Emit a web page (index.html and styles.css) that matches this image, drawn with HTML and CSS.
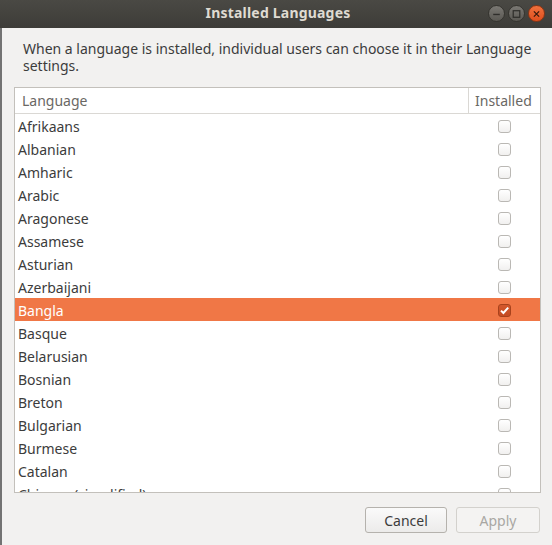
FILE: index.html
```html
<!DOCTYPE html>
<html>
<head>
<meta charset="utf-8">
<link rel="stylesheet" href="styles.css">
</head>
<body>
<div class="window">
  <div class="titlebar">
    <span class="title">Installed Languages</span>
    <div class="wbtns">
      <span class="wbtn gray"><svg width="16" height="16" viewBox="0 0 16 16"><line x1="4.5" y1="8.5" x2="11.5" y2="8.5" stroke="#2f2e2b" stroke-width="1.5"/></svg></span>
      <span class="wbtn gray"><svg width="16" height="16" viewBox="0 0 16 16"><rect x="4.5" y="4.5" width="7" height="7" fill="none" stroke="#2f2e2b" stroke-width="1.3"/></svg></span>
      <span class="wbtn close"><svg width="16" height="16" viewBox="0 0 16 16"><path d="M5.2 5.2 L10.8 10.8 M10.8 5.2 L5.2 10.8" stroke="#3a1a0c" stroke-width="1.4"/></svg></span>
    </div>
  </div>
  <div class="content">
    <p class="desc">When a language is installed, individual users can choose it in their Language settings.</p>
    <div class="tree">
      <div class="thead">
        <div class="th th-lang">Language</div>
        <div class="th th-inst">Installed</div>
      </div>
      <div class="rows">
        <div class="row"><span class="name">Afrikaans</span><span class="cell"><span class="cb"></span></span></div>
        <div class="row"><span class="name">Albanian</span><span class="cell"><span class="cb"></span></span></div>
        <div class="row"><span class="name">Amharic</span><span class="cell"><span class="cb"></span></span></div>
        <div class="row"><span class="name">Arabic</span><span class="cell"><span class="cb"></span></span></div>
        <div class="row"><span class="name">Aragonese</span><span class="cell"><span class="cb"></span></span></div>
        <div class="row"><span class="name">Assamese</span><span class="cell"><span class="cb"></span></span></div>
        <div class="row"><span class="name">Asturian</span><span class="cell"><span class="cb"></span></span></div>
        <div class="row"><span class="name">Azerbaijani</span><span class="cell"><span class="cb"></span></span></div>
        <div class="row selected"><span class="name">Bangla</span><span class="cell"><span class="cb checked"><svg width="11" height="11" viewBox="0 0 11 11"><path d="M2 5.6 L4.4 8 L9.2 2.6" fill="none" stroke="#ffffff" stroke-width="2"/></svg></span></span></div>
        <div class="row"><span class="name">Basque</span><span class="cell"><span class="cb"></span></span></div>
        <div class="row"><span class="name">Belarusian</span><span class="cell"><span class="cb"></span></span></div>
        <div class="row"><span class="name">Bosnian</span><span class="cell"><span class="cb"></span></span></div>
        <div class="row"><span class="name">Breton</span><span class="cell"><span class="cb"></span></span></div>
        <div class="row"><span class="name">Bulgarian</span><span class="cell"><span class="cb"></span></span></div>
        <div class="row"><span class="name">Burmese</span><span class="cell"><span class="cb"></span></span></div>
        <div class="row"><span class="name">Catalan</span><span class="cell"><span class="cb"></span></span></div>
        <div class="row"><span class="name">Chinese (simplified)</span><span class="cell"><span class="cb"></span></span></div>
      </div>
    </div>
    <div class="actions">
      <button class="btn">Cancel</button>
      <button class="btn disabled">Apply</button>
    </div>
  </div>
</div>
</body>
</html>
```
FILE: styles.css
```css
html, body {
  margin: 0;
  padding: 0;
}
body {
  width: 552px;
  height: 545px;
  overflow: hidden;
  background: #f2f1f0;
  font-family: "Noto Sans", "DejaVu Sans", sans-serif;
  font-size: 14px;
  color: #3c3c3c;
}
.window {
  display: flex;
  flex-direction: column;
  height: 545px;
}
.titlebar {
  height: 28px;
  flex: none;
  background: linear-gradient(#4a4944, #3d3c38);
  display: flex;
  align-items: center;
  justify-content: center;
  position: relative;
}
.title {
  color: #dfdbd2;
  font-weight: bold;
  font-size: 14px;
  letter-spacing: 0.2px;
  margin-left: 4px;
  margin-bottom: 3px;
}
.wbtns {
  position: absolute;
  right: 7px;
  top: 5px;
  display: flex;
  gap: 3px;
}
.wbtn {
  width: 17px;
  height: 17px;
  border-radius: 50%;
  display: flex;
  align-items: center;
  justify-content: center;
  box-sizing: border-box;
}
.wbtn.gray {
  background: linear-gradient(#7a7873, #5a5853);
  border: 1px solid #35342f;
}
.wbtn.close {
  background: linear-gradient(#f0713d, #df4f1e);
  border: 1px solid #8e3412;
}
.content {
  flex: 1;
  border-left: 2px solid #737373;
  padding: 12px 11px 0 12px;
  display: flex;
  flex-direction: column;
}
.desc {
  margin: 0 0 13px 9px;
  line-height: 17px;
}
.tree {
  height: 406px;
  box-sizing: border-box;
  border: 1px solid #c3c0bb;
  background: #ffffff;
  display: flex;
  flex-direction: column;
  overflow: hidden;
}
.thead {
  display: grid;
  grid-template-columns: 1fr 71px;
  height: 26px;
  flex: none;
  border-bottom: 1px solid #dad8d4;
  box-sizing: border-box;
}
.th {
  color: #6a6864;
  display: flex;
  align-items: center;
}
.th-lang {
  padding-left: 7px;
  border-right: 1px solid #dad8d4;
}
.th-inst {
  padding-left: 6px;
}
.rows {
  flex: 1;
  overflow: hidden;
}
.row {
  display: grid;
  grid-template-columns: 1fr 71px;
  height: 23px;
  align-items: center;
}
.name {
  padding-left: 3px;
  padding-top: 2px;
}
.row.selected {
  background: #f07746;
  color: #ffffff;
}
.cell {
  display: flex;
  justify-content: center;
  padding-right: 1px;
  padding-top: 1px;
}
.cb {
  width: 13px;
  height: 13px;
  box-sizing: border-box;
  border: 1px solid #bab8b4;
  border-radius: 3px;
  background: linear-gradient(#ffffff, #f1f0ef);
  display: flex;
  align-items: center;
  justify-content: center;
}
.cb.checked {
  background: linear-gradient(#d4582c, #c44b22);
  border-color: #a8421c;
}
.actions {
  display: flex;
  justify-content: flex-end;
  gap: 9px;
  margin-top: 14px;
  padding-right: 1px;
}
.btn {
  height: 26px;
  box-sizing: border-box;
  border: 1px solid #b5b2ad;
  border-radius: 3px;
  background: linear-gradient(#fafafa, #ecebea);
  font-family: "Noto Sans", "DejaVu Sans", sans-serif;
  font-size: 14px;
  color: #3c3c3c;
  padding: 0;
  width: 82px;
}
.btn.disabled {
  width: 84px;
  background: #f4f3f2;
  border-color: #d3d1cd;
  color: #a9a7a3;
}
```
